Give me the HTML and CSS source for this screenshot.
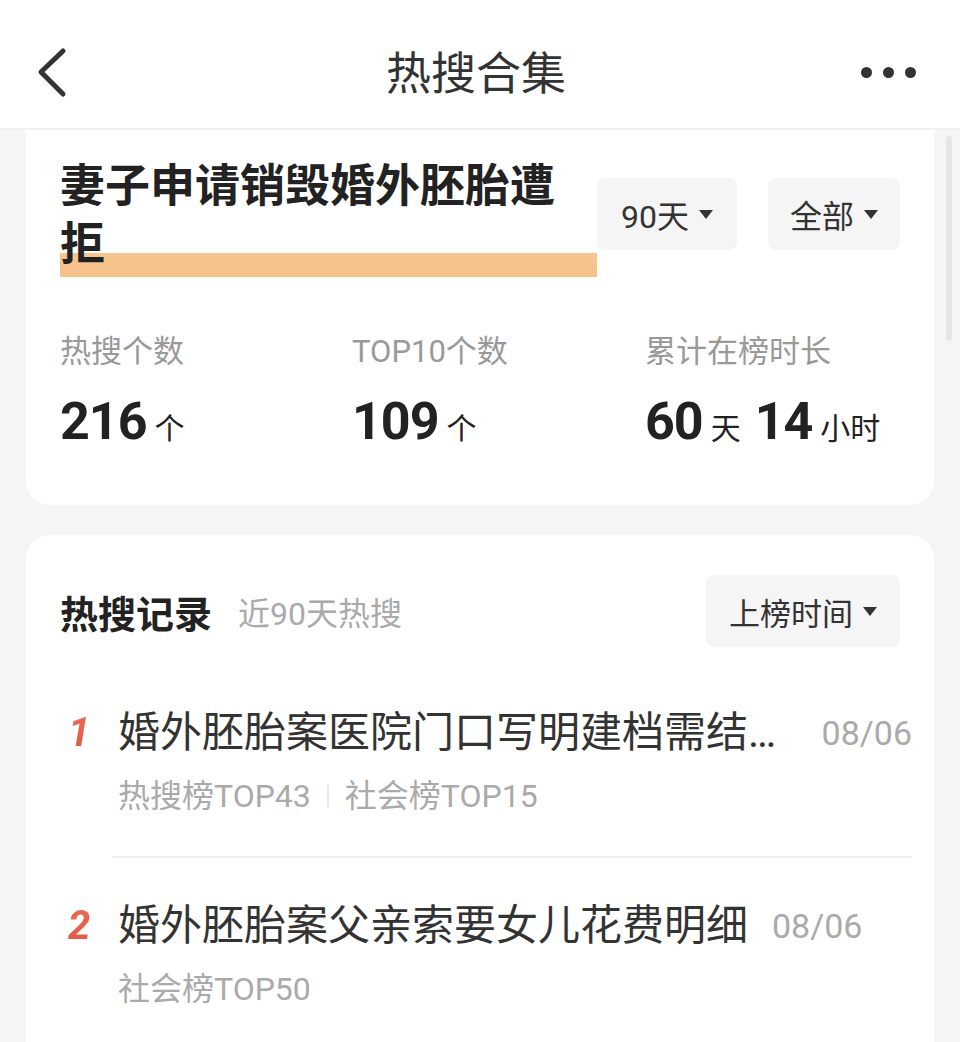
FILE: index.html
```html
<!DOCTYPE html>
<html>
<head>
  <title>热搜合集</title>
  <link rel="stylesheet" href="styles.css">
</head>
<body>
  <div class="nav">
    <div class="nav-left">
      <svg class="back-icon" width="34" height="52" viewBox="0 0 34 52">
        <path d="M27 4 L5 25 L27 47" fill="none" stroke="#333" stroke-width="5" stroke-linecap="round" stroke-linejoin="round"/>
      </svg>
    </div>
    <div class="nav-title">热搜合集</div>
    <div class="nav-right">
      <span class="dot"></span><span class="dot"></span><span class="dot"></span>
    </div>
  </div>

  <div class="card summary">
    <div class="summary-top">
      <h1 class="topic">妻子申请销毁婚外胚胎遭拒</h1>
      <div class="filters">
        <div class="drop drop-days">90天</div>
        <div class="drop drop-all">全部</div>
      </div>
    </div>

    <div class="stats">
      <div class="stat">
        <div class="stat-label">热搜个数</div>
        <div class="stat-value"><b>216</b><span>个</span></div>
      </div>
      <div class="stat">
        <div class="stat-label">TOP10个数</div>
        <div class="stat-value"><b>109</b><span>个</span></div>
      </div>
      <div class="stat">
        <div class="stat-label">累计在榜时长</div>
        <div class="stat-value"><b>60</b><span>天</span><b class="gap">14</b><span>小时</span></div>
      </div>
    </div>
  </div>

  <div class="card records">
    <div class="records-head">
      <div class="records-title">热搜记录</div>
      <div class="records-sub">近90天热搜</div>
      <div class="drop drop-sort">上榜时间</div>
    </div>

    <div class="record">
      <div class="rank">1</div>
      <div class="record-body">
        <div class="record-line">
          <div class="record-title">婚外胚胎案医院门口写明建档需结婚证</div>
          <div class="record-date">08/06</div>
        </div>
        <div class="record-tags">
          <span>热搜榜TOP43</span><span class="sep"></span><span>社会榜TOP15</span>
        </div>
      </div>
    </div>

    <div class="record">
      <div class="rank">2</div>
      <div class="record-body">
        <div class="record-line">
          <div class="record-title">婚外胚胎案父亲索要女儿花费明细</div>
          <div class="record-date">08/06</div>
        </div>
        <div class="record-tags">
          <span>社会榜TOP50</span>
        </div>
      </div>
    </div>
  </div>

  <div class="scroll-thumb"></div>
</body>
</html>
```

FILE: styles.css
```css
body {
  margin: 0;
  background-color: #f5f5f5;
  font-family: Roboto, "Noto Sans CJK SC", sans-serif;
  color: #333;
}

.nav {
  display: grid;
  grid-template-columns: 1fr auto 1fr;
  align-items: center;
  height: 130px;
  box-sizing: border-box;
  padding: 22px 44px 0 36px;
  background-color: #fff;
  border-bottom: 2px solid #efefef;
}

.back-icon {
  display: block;
  margin-top: -4px;
}

.nav-title {
  font-size: 45px;
  line-height: 60px;
  color: #333;
}

.nav-right {
  display: flex;
  justify-content: flex-end;
  gap: 11px;
  margin-top: -6px;
}

.dot {
  width: 11px;
  height: 11px;
  border-radius: 50%;
  background-color: #333;
}

.card {
  margin: 0 26px;
  background-color: #fff;
}

/* summary card */
.summary {
  border-radius: 0 0 24px 24px;
  padding: 28px 34px 41px 34px;
}

.summary-top {
  display: flex;
  align-items: flex-start;
}

.topic {
  width: 537px;
  margin: 0;
  padding-bottom: 3px;
  font-size: 45px;
  line-height: 58px;
  font-weight: bold;
  color: #222;
  background-image: linear-gradient(#f7c68d, #f5c288);
  background-size: 100% 24px;
  background-position: left bottom;
  background-repeat: no-repeat;
}

.filters {
  display: flex;
  gap: 31px;
  margin-top: 20px;
}

.drop {
  display: flex;
  align-items: center;
  justify-content: center;
  height: 72px;
  box-sizing: border-box;
  background-color: #f5f5f5;
  border-radius: 8px;
  font-size: 32px;
  color: #333;
}

.drop::after {
  content: '';
  margin-left: 10px;
  border-left: 7px solid transparent;
  border-right: 7px solid transparent;
  border-top: 9px solid #333;
}

.drop-days {
  width: 140px;
}

.drop-all {
  width: 132px;
}

.stats {
  display: grid;
  grid-template-columns: 292px 293px 1fr;
  margin-top: 55px;
}

.stat-label {
  font-size: 31px;
  line-height: 40px;
  color: #999;
}

.stat-value {
  margin-top: 20px;
  line-height: 60px;
  color: #222;
}

.stat-value b {
  font-size: 52px;
  font-weight: bold;
  letter-spacing: -1px;
}

.stat-value b.gap {
  margin-left: 14px;
}

.stat-value span {
  margin-left: 8px;
  font-size: 30px;
}

/* records card */
.records {
  margin-top: 30px;
  border-radius: 24px 24px 0 0;
  padding: 40px 22px 10px 34px;
}

.records-head {
  display: flex;
  align-items: center;
  padding-right: 12px;
  margin-bottom: 18px;
}

.records-title {
  font-size: 38px;
  font-weight: bold;
  color: #222;
}

.records-sub {
  margin-left: 26px;
  font-size: 32px;
  color: #aaa;
}

.drop-sort {
  width: 194px;
  margin-left: auto;
  font-size: 31px;
}

.record {
  display: flex;
  align-items: flex-start;
}

.rank {
  width: 44px;
  padding: 40px 0 0 8px;
  font-size: 40px;
  line-height: 56px;
  font-style: italic;
  font-weight: bold;
  background-image: linear-gradient(#f38466, #e2523f);
  -webkit-background-clip: text;
  background-clip: text;
  color: transparent;
}

.record-body {
  flex: 1;
  min-width: 0;
  padding: 40px 0 40px 6px;
  border-bottom: 2px solid #f0f0f0;
}

.record:last-child .record-body {
  border-bottom: none;
}

.record-line {
  display: flex;
  align-items: center;
}

.record-title {
  min-width: 0;
  font-size: 42px;
  line-height: 56px;
  color: #333;
  white-space: nowrap;
  overflow: hidden;
  text-overflow: ellipsis;
}

.record-date {
  flex: none;
  margin-left: 24px;
  font-size: 34px;
  color: #aaa;
}

.record-tags {
  display: flex;
  align-items: center;
  margin-top: 15px;
  font-size: 32px;
  line-height: 40px;
  color: #aaa;
}

.sep {
  width: 2px;
  height: 22px;
  margin: 0 16px;
  background-color: #e6e6e6;
}

.scroll-thumb {
  position: absolute;
  top: 136px;
  right: 8px;
  width: 6px;
  height: 205px;
  border-radius: 3px;
  background-color: #e4e7e7;
}
```
